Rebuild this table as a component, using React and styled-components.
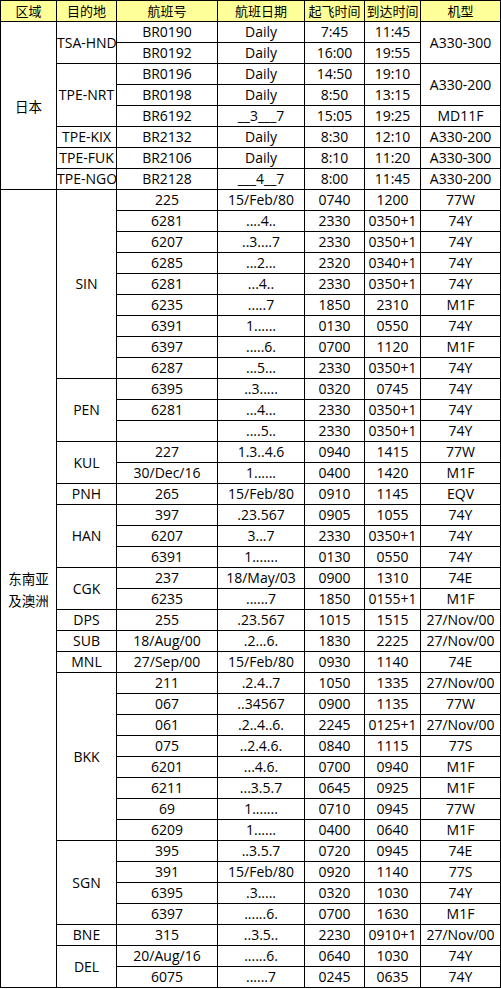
import React from 'react';
import styled, { createGlobalStyle } from 'styled-components';

const GlobalStyle = createGlobalStyle`
  html, body {
    margin: 0;
    padding: 0;
    background: #ffffff;
  }
  body {
    font-family: 'Open Sans', 'Noto Sans CJK SC', sans-serif;
    color: #000000;
  }
`;

const Table = styled.table`
  border-collapse: collapse;
  table-layout: fixed;
  width: 500px;
  font-size: 14px;
  line-height: 20px;
`;

const Col = styled.col`
  width: ${props => props.w}px;
`;

const HeadRow = styled.tr`
  height: 21px;
  background: #ffff99;
`;

const Row = styled.tr`
  height: 21px;
`;

const HeadCell = styled.th`
  border: 1px solid #000000;
  padding: 0;
  font-weight: 400;
  font-size: 13px;
  font-family: 'Noto Sans CJK SC', sans-serif;
  text-align: center;
  white-space: nowrap;
  overflow: hidden;
`;

const Cell = styled.td`
  border: 1px solid #000000;
  padding: 0;
  text-align: center;
  vertical-align: middle;
  white-space: nowrap;
  overflow: hidden;
`;

const RegionCell = styled(Cell)`
  font-family: 'Noto Sans CJK SC', sans-serif;
  font-size: 13.5px;
  line-height: 22px;
  white-space: normal;
`;

const columns = [56, 60, 101, 87, 60, 56, 80];
const headers = ['区域', '目的地', '航班号', '航班日期', '起飞时间', '到达时间', '机型'];

// each destination: [code, rows]; row = [flight, days, dep, arr, type]
// type === null means the cell above spans it
const regions = [
  {
    name: ['日本'],
    dests: [
      ['TSA-HND', [
        ['BR0190', 'Daily', '7:45', '11:45', 'A330-300', 2],
        ['BR0192', 'Daily', '16:00', '19:55', null],
      ]],
      ['TPE-NRT', [
        ['BR0196', 'Daily', '14:50', '19:10', 'A330-200', 2],
        ['BR0198', 'Daily', '8:50', '13:15', null],
        ['BR6192', '__3___7', '15:05', '19:25', 'MD11F'],
      ]],
      ['TPE-KIX', [['BR2132', 'Daily', '8:30', '12:10', 'A330-200']]],
      ['TPE-FUK', [['BR2106', 'Daily', '8:10', '11:20', 'A330-300']]],
      ['TPE-NGO', [['BR2128', '___4__7', '8:00', '11:45', 'A330-200']]],
    ],
  },
  {
    name: ['东南亚', '及澳洲'],
    dests: [
      ['SIN', [
        ['225', '15/Feb/80', '0740', '1200', '77W'],
        ['6281', '....4..', '2330', '0350+1', '74Y'],
        ['6207', '..3....7', '2330', '0350+1', '74Y'],
        ['6285', '...2...', '2320', '0340+1', '74Y'],
        ['6281', '...4..', '2330', '0350+1', '74Y'],
        ['6235', '.....7', '1850', '2310', 'M1F'],
        ['6391', '1......', '0130', '0550', '74Y'],
        ['6397', '.....6.', '0700', '1120', 'M1F'],
        ['6287', '...5...', '2330', '0350+1', '74Y'],
      ]],
      ['PEN', [
        ['6395', '..3.....', '0320', '0745', '74Y'],
        ['6281', '...4...', '2330', '0350+1', '74Y'],
        ['', '....5..', '2330', '0350+1', '74Y'],
      ]],
      ['KUL', [
        ['227', '1.3..4.6', '0940', '1415', '77W'],
        ['30/Dec/16', '1......', '0400', '1420', 'M1F'],
      ]],
      ['PNH', [['265', '15/Feb/80', '0910', '1145', 'EQV']]],
      ['HAN', [
        ['397', '.23.567', '0905', '1055', '74Y'],
        ['6207', '3...7', '2330', '0350+1', '74Y'],
        ['6391', '1.......', '0130', '0550', '74Y'],
      ]],
      ['CGK', [
        ['237', '18/May/03', '0900', '1310', '74E'],
        ['6235', '......7', '1850', '0155+1', 'M1F'],
      ]],
      ['DPS', [['255', '.23.567', '1015', '1515', '27/Nov/00']]],
      ['SUB', [['18/Aug/00', '.2...6.', '1830', '2225', '27/Nov/00']]],
      ['MNL', [['27/Sep/00', '15/Feb/80', '0930', '1140', '74E']]],
      ['BKK', [
        ['211', '.2.4..7', '1050', '1335', '27/Nov/00'],
        ['067', '..34567', '0900', '1135', '77W'],
        ['061', '.2..4..6.', '2245', '0125+1', '27/Nov/00'],
        ['075', '..2.4.6.', '0840', '1115', '77S'],
        ['6201', '...4.6.', '0700', '0940', 'M1F'],
        ['6211', '...3.5.7', '0645', '0925', 'M1F'],
        ['69', '1.......', '0710', '0945', '77W'],
        ['6209', '1......', '0400', '0640', 'M1F'],
      ]],
      ['SGN', [
        ['395', '..3.5.7', '0720', '0945', '74E'],
        ['391', '15/Feb/80', '0920', '1140', '77S'],
        ['6395', '.3.....', '0320', '1030', '74Y'],
        ['6397', '......6.', '0700', '1630', 'M1F'],
      ]],
      ['BNE', [['315', '..3.5..', '2230', '0910+1', '27/Nov/00']]],
      ['DEL', [
        ['20/Aug/16', '......6.', '0640', '1030', '74Y'],
        ['6075', '......7', '0245', '0635', '74Y'],
      ]],
    ],
  },
];

const App = () => {
  const body = [];
  regions.forEach((region, ri) => {
    const total = region.dests.reduce((n, d) => n + d[1].length, 0);
    region.dests.forEach(([code, rows], di) => {
      rows.forEach((r, i) => {
        const [flight, days, dep, arr, type, span] = r;
        body.push(
          <Row key={`${ri}-${di}-${i}`}>
            {di === 0 && i === 0 && (
              <RegionCell rowSpan={total}>
                {region.name.map((line, li) => (
                  <React.Fragment key={li}>
                    {li > 0 && <br />}
                    {line}
                  </React.Fragment>
                ))}
              </RegionCell>
            )}
            {i === 0 && <Cell rowSpan={rows.length}>{code}</Cell>}
            <Cell>{flight}</Cell>
            <Cell>{days}</Cell>
            <Cell>{dep}</Cell>
            <Cell>{arr}</Cell>
            {type !== null && <Cell rowSpan={span || 1}>{type}</Cell>}
          </Row>
        );
      });
    });
  });

  return (
    <>
      <GlobalStyle />
      <Table>
        <colgroup>
          {columns.map((w, i) => <Col key={i} w={w} />)}
        </colgroup>
        <thead>
          <HeadRow>
            {headers.map(h => <HeadCell key={h}>{h}</HeadCell>)}
          </HeadRow>
        </thead>
        <tbody>{body}</tbody>
      </Table>
    </>
  );
};

export default App;
